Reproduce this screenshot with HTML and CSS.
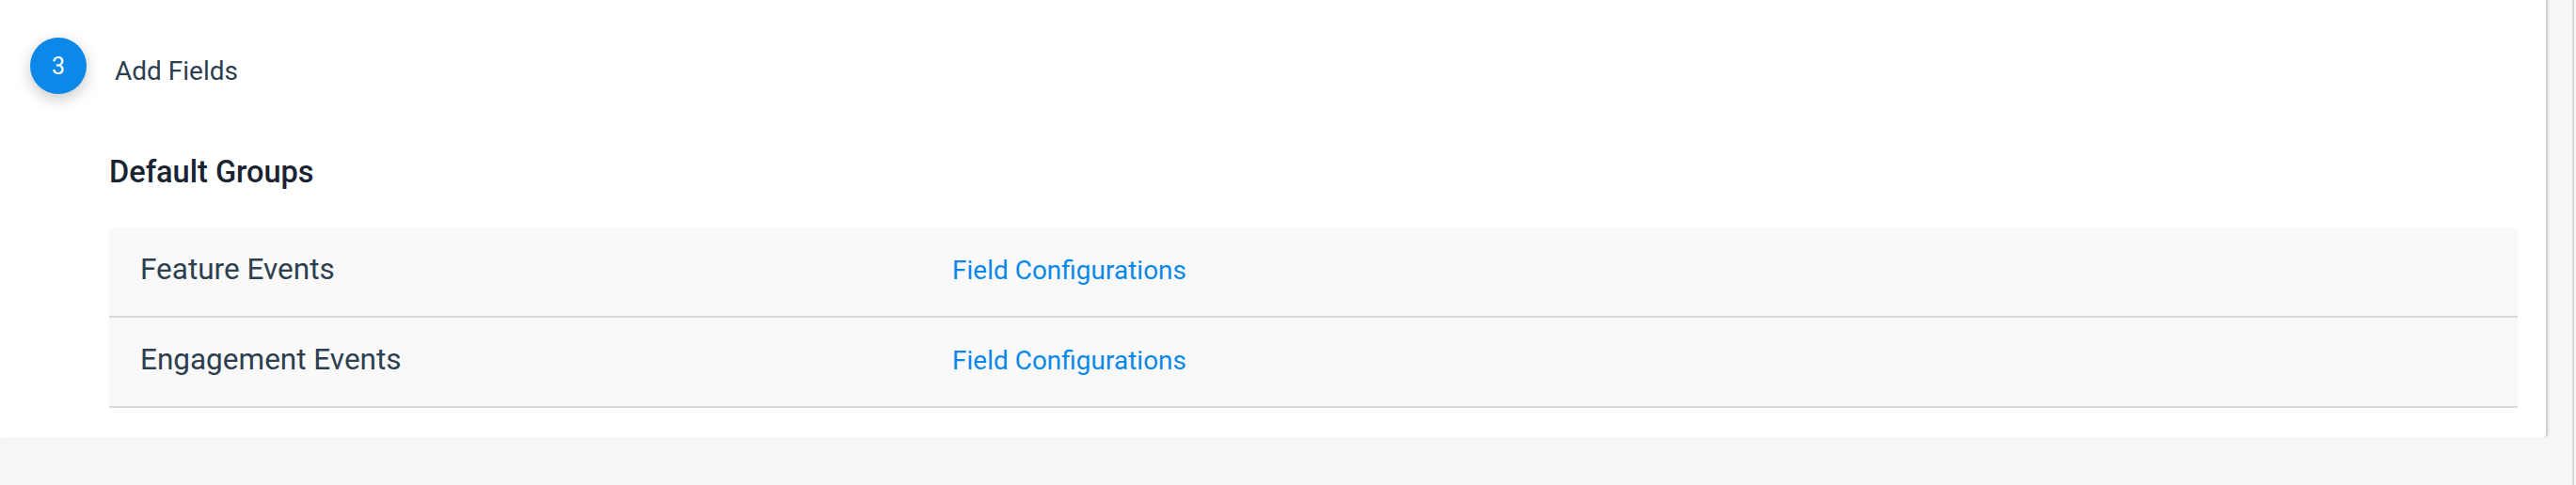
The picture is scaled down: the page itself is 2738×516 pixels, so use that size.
FILE: index.html
```html
<!DOCTYPE html>
<html lang="en">
<head>
<meta charset="utf-8">
<title>Add Fields</title>
<link rel="stylesheet" href="styles.css">
</head>
<body>
<div class="page">
  <div class="card">
    <div class="step">
      <div class="step-num">3</div>
      <div class="step-title">Add Fields</div>
    </div>
    <div class="section">
      <h2 class="section-title">Default Groups</h2>
      <div class="groups">
        <div class="group-row">
          <div class="group-name">Feature Events</div>
          <a class="group-link" href="#">Field Configurations</a>
        </div>
        <div class="group-row">
          <div class="group-name">Engagement Events</div>
          <a class="group-link" href="#">Field Configurations</a>
        </div>
      </div>
    </div>
  </div>
  <div class="gutter"><div class="gutter-line"></div></div>
</div>
</body>
</html>
```

FILE: styles.css
```css
* { box-sizing: border-box; }
html, body {
  margin: 0;
  padding: 0;
  background: #f5f6f8;
  font-family: Roboto, "Liberation Sans", Arial, sans-serif;
}
.page {
  display: flex;
  width: 2738px;
  height: 516px;
  align-items: flex-start;
}
.card {
  width: 2708px;
  height: 466px;
  background: #ffffff;
  border-right: 2px solid #d2d2d2;
  border-bottom-right-radius: 5px;
  box-shadow: 1px 0 2px rgba(0, 0, 0, 0.08);
  padding: 0 30px 0 0;
  display: flex;
  flex-direction: column;
}
.step {
  display: flex;
  align-items: flex-start;
  gap: 30px;
  padding: 40px 0 0 32px;
}
.step-num {
  width: 60px;
  height: 60px;
  border-radius: 50%;
  background: #0b88e8;
  color: #ffffff;
  font-size: 25px;
  display: flex;
  align-items: center;
  justify-content: center;
  box-shadow: 0 5px 16px rgba(0, 0, 0, 0.22);
  flex-shrink: 0;
}
.step-title {
  margin-top: 15px;
  font-size: 28px;
  line-height: 42px;
  color: #2d3e50;
}
.section {
  padding-left: 116px;
}
.section-title {
  margin: 63px 0 39px;
  font-size: 32.5px;
  line-height: 40px;
  font-weight: 500;
  color: #1a2331;
}
.groups {
  display: flex;
  flex-direction: column;
}
.group-row {
  display: grid;
  grid-template-columns: 863px 1fr;
  align-items: baseline;
  height: 96px;
  padding: 25px 0 0 33px;
  background: #f9f9f9;
  border-bottom: 2px solid #d9d9d9;
}
.group-name {
  font-size: 31.5px;
  line-height: 40px;
  color: #2d3e50;
}
.group-link {
  font-size: 28px;
  line-height: 40px;
  color: #0b88e8;
  text-decoration: none;
}
.gutter {
  flex: 1;
  align-self: stretch;
  display: flex;
  justify-content: flex-end;
  padding-right: 2px;
}
.gutter-line {
  width: 2px;
  background: #d6d6d6;
}
```
